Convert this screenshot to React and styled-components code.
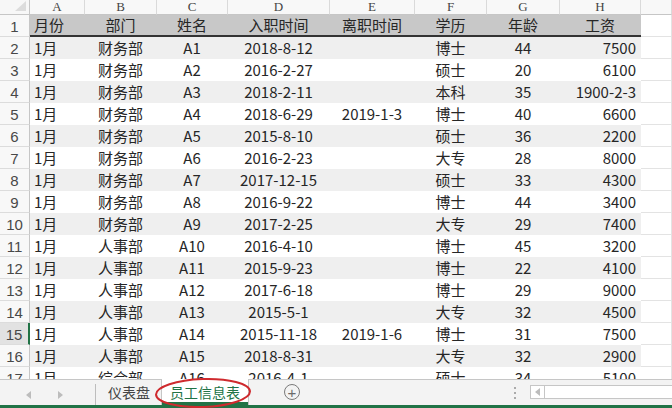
import React from 'react'
import styled, {createGlobalStyle} from 'styled-components'

const GlobalStyle = createGlobalStyle`
  html, body {
    margin: 0;
    padding: 0;
    background: #ffffff;
    overflow: hidden;
  }
  body {
    font-family: "Noto Sans CJK SC", "Liberation Sans", sans-serif;
  }
`

const COLS = '30px 55px 72px 71px 102px 85px 72px 73px 81px 1fr'
const LETTERS = ['A', 'B', 'C', 'D', 'E', 'F', 'G', 'H', '']
const ALIGN = ['left', 'center', 'center', 'center', 'center', 'center', 'center', 'right']

const HEAD = ['月份', '部门', '姓名', '入职时间', '离职时间', '学历', '年龄', '工资']

const DATA = [
  ['1月', '财务部', 'A1', '2018-8-12', '', '博士', '44', '7500'],
  ['1月', '财务部', 'A2', '2016-2-27', '', '硕士', '20', '6100'],
  ['1月', '财务部', 'A3', '2018-2-11', '', '本科', '35', '1900-2-3'],
  ['1月', '财务部', 'A4', '2018-6-29', '2019-1-3', '博士', '40', '6600'],
  ['1月', '财务部', 'A5', '2015-8-10', '', '硕士', '36', '2200'],
  ['1月', '财务部', 'A6', '2016-2-23', '', '大专', '28', '8000'],
  ['1月', '财务部', 'A7', '2017-12-15', '', '硕士', '33', '4300'],
  ['1月', '财务部', 'A8', '2016-9-22', '', '博士', '44', '3400'],
  ['1月', '财务部', 'A9', '2017-2-25', '', '大专', '29', '7400'],
  ['1月', '人事部', 'A10', '2016-4-10', '', '博士', '45', '3200'],
  ['1月', '人事部', 'A11', '2015-9-23', '', '博士', '22', '4100'],
  ['1月', '人事部', 'A12', '2017-6-18', '', '博士', '29', '9000'],
  ['1月', '人事部', 'A13', '2015-5-1', '', '大专', '32', '4500'],
  ['1月', '人事部', 'A14', '2015-11-18', '2019-1-6', '博士', '31', '7500'],
  ['1月', '人事部', 'A15', '2018-8-31', '', '大专', '32', '2900'],
  ['1月', '综合部', 'A16', '2016-4-1', '', '硕士', '34', '5100'],
]

const Window = styled.div`
  width: 672px;
  height: 408px;
  display: flex;
  flex-direction: column;
  overflow: hidden;
  background: #fff;
`

const Sheet = styled.div`
  flex: 1;
  min-height: 0;
  overflow: hidden;
  display: flex;
  flex-direction: column;
`

const Row = styled.div`
  display: grid;
  grid-template-columns: ${COLS};
  height: ${p => p.$h}px;
  flex: none;
`

const Corner = styled.div`
  position: relative;
  background: #f7f7f7;
  border-right: 1px solid #c6c6c6;
  border-bottom: 1px solid #c6c6c6;
  &::after {
    content: '';
    position: absolute;
    right: 3px;
    bottom: 3px;
    border-left: 11px solid transparent;
    border-bottom: 10px solid #dcdcdc;
  }
`

const Letter = styled.div`
  background: #f8f8f8;
  border-right: 1px solid #dadada;
  border-bottom: 1px solid #c6c6c6;
  font-family: "Liberation Serif", "DejaVu Serif", serif;
  font-size: 13px;
  color: #444;
  line-height: 14px;
  text-align: center;
`

const RowNum = styled.div`
  background: ${p => (p.$sel ? '#e2e2e2' : '#f8f8f8')};
  border-right: ${p => (p.$sel ? '2px solid #217346' : '1px solid #c6c6c6')};
  border-bottom: 1px solid #dcdcdc;
  font-family: "Liberation Sans", "DejaVu Sans", sans-serif;
  font-size: 15px;
  color: #484848;
  display: flex;
  align-items: flex-end;
  justify-content: center;
  padding-bottom: 1px;
`

const Cell = styled.div`
  background: ${p => p.$bg};
  border-bottom: ${p => (p.$head ? '2px solid #333' : 'none')};
  color: #262626;
  font-size: 15px;
  line-height: 20px;
  padding: 0 5px 0 4px;
  white-space: nowrap;
  overflow: hidden;
  display: flex;
  align-items: center;
  justify-content: ${p => (p.$align === 'left' ? 'flex-start' : p.$align === 'right' ? 'flex-end' : 'center')};
`

const Empty = styled.div`
  border-right: 1px solid #e3e3e3;
  border-bottom: 1px solid #e3e3e3;
`

const TabBar = styled.div`
  position: relative;
  flex: none;
  height: 25px;
  border-top: 1px solid #c6c6c6;
  background: #f3f3f3;
  display: flex;
  align-items: stretch;
`

const Nav = styled.div`
  width: 96px;
  display: flex;
  align-items: center;
  justify-content: space-around;
  padding: 0 18px 0 12px;
  box-sizing: border-box;
  border-right: 1px solid #bdbdbd;
  margin: 4px 0 0;
`

const Arrow = styled.span`
  width: 0;
  height: 0;
  border-top: 4px solid transparent;
  border-bottom: 4px solid transparent;
  ${p => (p.$dir === 'left' ? 'border-right: 5px solid #bcbcbc;' : 'border-left: 5px solid #bcbcbc;')}
`

const Tab = styled.div`
  padding: 0 ${p => (p.$active ? 8 : 11)}px;
  margin-left: ${p => (p.$first ? 1 : 0)}px;
  display: flex;
  align-items: center;
  font-size: 14px;
  color: ${p => (p.$active ? '#217346' : '#444')};
  background: ${p => (p.$active ? '#ffffff' : 'transparent')};
  border-left: ${p => (p.$active ? '1px solid #c6c6c6' : 'none')};
  border-right: ${p => (p.$active ? '1px solid #c6c6c6' : 'none')};
  box-shadow: ${p => (p.$active ? 'inset 0 -3px 0 #217346' : 'none')};
  margin-top: -1px;
`

const AddBtn = styled.div`
  width: 16px;
  height: 16px;
  margin: 4px 0 0 35px;
  border: 1px solid #7a7a7a;
  border-radius: 50%;
  display: flex;
  align-items: center;
  justify-content: center;
  color: #6a6a6a;
  font-family: "Liberation Sans", sans-serif;
  font-size: 15px;
  line-height: 1;
  box-sizing: border-box;
`

const Dots = styled.div`
  margin-left: auto;
  margin-right: 14px;
  width: 2px;
  display: flex;
  flex-direction: column;
  justify-content: center;
  gap: 3px;
  & > span {
    width: 2px;
    height: 2px;
    background: #aaa;
  }
`

const Scroll = styled.div`
  width: 142px;
  height: 14px;
  margin-top: 5px;
  border: 1px solid #c6c6c6;
  border-right: none;
  background: #fff;
  display: flex;
  box-sizing: border-box;
`

const ScrollBtn = styled.div`
  width: 13px;
  border-right: 1px solid #c6c6c6;
  display: flex;
  align-items: center;
  justify-content: center;
`

const Ring = styled.svg`
  position: absolute;
  left: 150px;
  top: -9px;
  pointer-events: none;
`

const Status = styled.div`
  flex: none;
  height: 3px;
  background: #217346;
`

function DataRow({idx, cells}) {
  const num = idx + 2
  const bg = num % 2 === 0 ? '#efefef' : '#ffffff'
  return (
    <Row $h={22}>
      <RowNum $sel={num === 15}>{num}</RowNum>
      {cells.map((c, i) => (
        <Cell key={i} $align={ALIGN[i]} $bg={bg}>
          {c}
        </Cell>
      ))}
      <Empty />
    </Row>
  )
}

export default function App() {
  return (
    <Window>
      <GlobalStyle />
      <Sheet>
        <Row $h={15}>
          <Corner />
          {LETTERS.map((l, i) => (
            <Letter key={i}>{l}</Letter>
          ))}
        </Row>
        <Row $h={22}>
          <RowNum>1</RowNum>
          {HEAD.map((h, i) => (
            <Cell key={i} $head $align={i === 0 ? 'left' : 'center'} $bg="#c8c8c8">
              {h}
            </Cell>
          ))}
          <Empty />
        </Row>
        {DATA.map((r, i) => (
          <DataRow key={i} idx={i} cells={r} />
        ))}
      </Sheet>
      <TabBar>
        <Nav>
          <Arrow $dir="left" />
          <Arrow $dir="right" />
        </Nav>
        <Tab $first>仪表盘</Tab>
        <Tab $active>员工信息表</Tab>
        <AddBtn>+</AddBtn>
        <Dots>
          <span />
          <span />
          <span />
        </Dots>
        <Scroll>
          <ScrollBtn>
            <Arrow $dir="left" />
          </ScrollBtn>
        </Scroll>
        <Ring width="108" height="40" viewBox="0 0 108 40">
          <ellipse cx="53" cy="22" rx="47" ry="14" fill="none" stroke="#cf2a2e" strokeWidth="2" transform="rotate(-2 53 22)" />
        </Ring>
      </TabBar>
      <Status />
    </Window>
  )
}
